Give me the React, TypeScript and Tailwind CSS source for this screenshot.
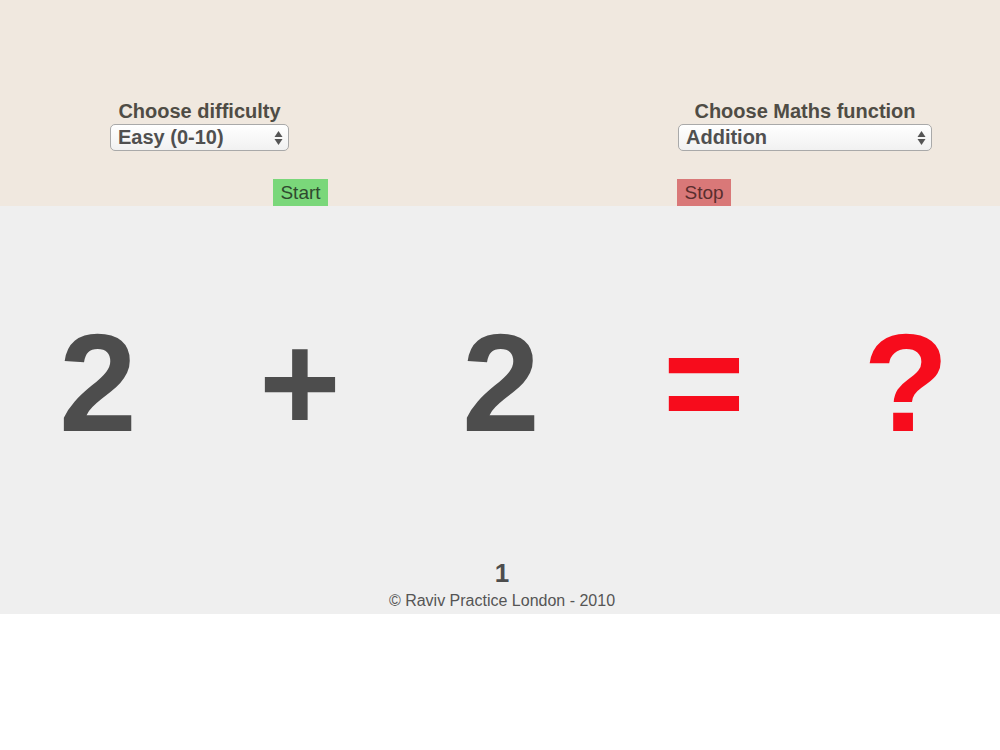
import { FC } from "react";

const Arrows: FC = () => (
  <svg
    className="pointer-events-none absolute right-[5px] top-1/2 -translate-y-1/2"
    width="9"
    height="16"
    viewBox="0 0 9 16"
  >
    <path d="M4.5 1 L8.5 7 L0.5 7 Z" fill="#555" />
    <path d="M4.5 15 L8.5 9 L0.5 9 Z" fill="#555" />
  </svg>
);

const Picker: FC<{ label: string; value: string; width: string }> = ({ label, value, width }) => (
  <div className={`flex flex-col items-center ${width}`}>
    <div className="text-[20px] leading-[24px] font-bold text-[#4f4c45] whitespace-nowrap">{label}</div>
    <div
      role="combobox"
      className="relative mt-[1px] w-full h-[27px] rounded-[5px] border border-[#a9a9a9] bg-gradient-to-b from-white to-[#f1f1f1] pl-[7px] text-[20px] leading-[24px] font-bold text-[#505050] cursor-default"
    >
      {value}
      <Arrows />
    </div>
  </div>
);

export default function App() {
  return (
    <div className="w-[1000px] min-h-[750px] bg-white font-['Liberation_Sans',Arial,sans-serif]">
      <div className="h-[206px] bg-[#f0e8df] pt-[99px] flex flex-col">
        <div className="flex items-start">
          <div className="ml-[110px]">
            <Picker label="Choose difficulty" value="Easy (0-10)" width="w-[179px]" />
          </div>
          <div className="ml-auto mr-[68px]">
            <Picker label="Choose Maths function" value="Addition" width="w-[254px]" />
          </div>
        </div>
        <div className="flex mt-auto pl-[273px]">
          <button className="w-[55px] h-[27px] bg-[#7ad77a] text-[#2f4a2f] text-[19px] leading-[27px]">
            Start
          </button>
          <button className="ml-[349px] w-[54px] h-[27px] bg-[#d97878] text-[#5a2e2e] text-[19px] leading-[27px]">
            Stop
          </button>
        </div>
      </div>

      <div className="h-[408px] bg-[#efefef] flex flex-col items-center">
        <div className="grid grid-cols-5 w-full mt-[107px] text-[140px] leading-none font-bold">
          <div className="text-center text-[#4d4d4d] pr-[4px]">2</div>
          <div className="text-center text-[#4d4d4d]">+</div>
          <div className="text-center text-[#4d4d4d] pl-[2px]">2</div>
          <div className="text-center text-[#f70c1c] pl-[8px]">=</div>
          <div className="text-center text-[#f70c1c] pl-[12px]">?</div>
        </div>
        <div className="mt-auto pb-[1px] flex flex-col items-center pl-[4px]">
          <div className="text-[26px] leading-[28px] font-bold text-[#4d4d4d]">1</div>
          <div className="mt-[2px] text-[16px] leading-[24px] text-[#555]">© Raviv Practice London - 2010</div>
        </div>
      </div>
    </div>
  );
}
